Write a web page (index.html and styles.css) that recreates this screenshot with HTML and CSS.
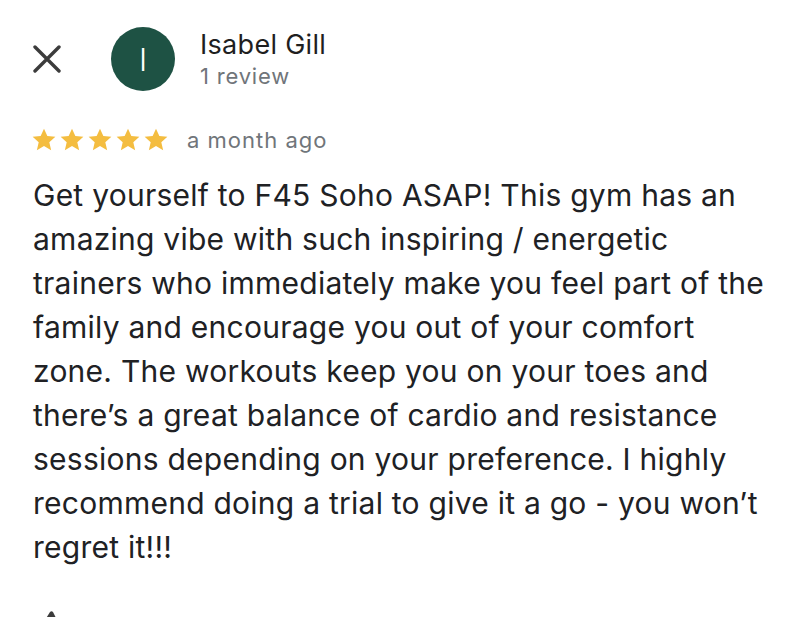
FILE: index.html
```html
<!DOCTYPE html>
<html>
<head>
<meta charset="utf-8">
<link rel="stylesheet" href="styles.css">
</head>
<body>
<div class="page">
  <header class="head">
    <button class="close" aria-label="Close">
      <svg width="28" height="28" viewBox="0 0 28 28"><path d="M2 2 L26 26 M26 2 L2 26" stroke="#3c3c3c" stroke-width="3.4" stroke-linecap="round" fill="none"/></svg>
    </button>
    <div class="avatar">I</div>
    <div class="who">
      <div class="name">Isabel Gill</div>
      <div class="count">1 review</div>
    </div>
  </header>
  <div class="meta">
    <div class="stars">
      <svg viewBox="0 0 24 24" class="star"><path d="M12 1.5l3.1 6.9 7.4.7-5.6 5 1.7 7.4L12 17.6 5.4 21.5l1.7-7.4-5.6-5 7.4-.7z"/></svg>
      <svg viewBox="0 0 24 24" class="star"><path d="M12 1.5l3.1 6.9 7.4.7-5.6 5 1.7 7.4L12 17.6 5.4 21.5l1.7-7.4-5.6-5 7.4-.7z"/></svg>
      <svg viewBox="0 0 24 24" class="star"><path d="M12 1.5l3.1 6.9 7.4.7-5.6 5 1.7 7.4L12 17.6 5.4 21.5l1.7-7.4-5.6-5 7.4-.7z"/></svg>
      <svg viewBox="0 0 24 24" class="star"><path d="M12 1.5l3.1 6.9 7.4.7-5.6 5 1.7 7.4L12 17.6 5.4 21.5l1.7-7.4-5.6-5 7.4-.7z"/></svg>
      <svg viewBox="0 0 24 24" class="star"><path d="M12 1.5l3.1 6.9 7.4.7-5.6 5 1.7 7.4L12 17.6 5.4 21.5l1.7-7.4-5.6-5 7.4-.7z"/></svg>
    </div>
    <span class="when">a month ago</span>
  </div>
  <p class="body">Get yourself to F45 Soho ASAP! This gym has an<br>amazing vibe with such inspiring / energetic<br>trainers who immediately make you feel part of the<br>family and encourage you out of your comfort<br>zone. The workouts keep you on your toes and<br>there’s a great balance of cardio and resistance<br>sessions depending on your preference. I highly<br>recommend doing a trial to give it a go - you won’t<br>regret it!!!</p>
  <div class="actions">
    <svg class="thumb" width="30" height="30" viewBox="0 0 30 30"><path d="M14 2 C15 1 16 1 17 2 L21 10 L9 10 Z" fill="#3c3c3c"/></svg>
  </div>
</div>
</body>
</html>
```
FILE: styles.css
```css
* { box-sizing: border-box; }
html, body { margin: 0; padding: 0; background: #fff; }
body {
  font-family: Inter, "Noto Sans", "Liberation Sans", sans-serif;
  color: #202124;
  overflow: hidden;
  width: 811px;
  height: 617px;
}
.page { padding: 27px 20px 0 33px; }
.head {
  display: flex;
  align-items: flex-start;
  height: 64px;
}
.close {
  border: 0;
  background: none;
  padding: 0;
  margin: 18px 0 0 0;
  width: 28px;
  height: 28px;
  display: flex;
}
.avatar {
  width: 64px;
  height: 64px;
  border-radius: 50%;
  background: #1e5244;
  color: #fff;
  font-size: 31px;
  font-weight: 300;
  display: flex;
  align-items: center;
  justify-content: center;
  margin-left: 50px;
}
.who { margin-left: 25px; margin-top: 2px; }
.name {
  font-size: 27px;
  line-height: 32px;
  letter-spacing: 0.3px;
  color: #1f1f1f;
}
.count {
  font-size: 22px;
  line-height: 30px;
  letter-spacing: 0.8px;
  color: #70757a;
}
.meta {
  display: flex;
  align-items: center;
  margin-top: 34px;
  height: 30px;
}
.stars { display: flex; gap: 2px; margin-left: -2px; }
.star { width: 26px; height: 26px; fill: #f4bd40; }
.when {
  margin-left: 18px;
  font-size: 22px;
  line-height: 30px;
  letter-spacing: 1px;
  color: #70757a;
}
.body {
  margin: 18px 0 0 0;
  font-size: 30px;
  line-height: 44px;
  color: #202124;
  letter-spacing: 0.25px;
  white-space: nowrap;
}
.actions { margin-top: 41px; padding-left: 3px; height: 10px; overflow: hidden; }
.thumb { display: block; }
```
